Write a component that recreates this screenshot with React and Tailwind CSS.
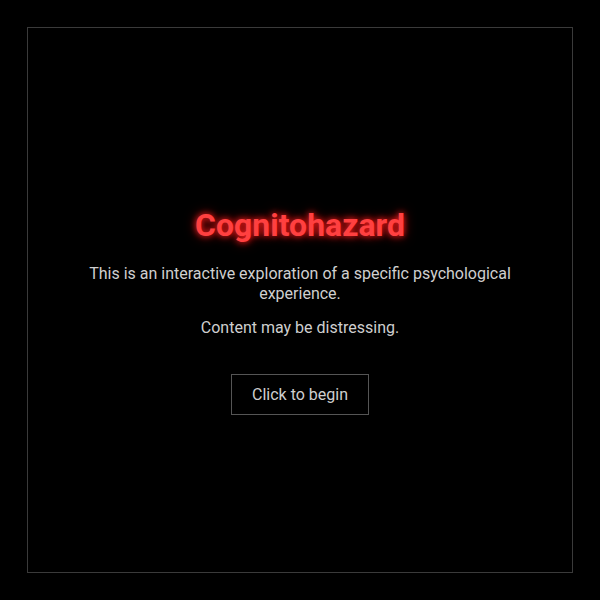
export default function App() {
  return (
    <div className="w-[600px] h-[600px] bg-black p-[27px]" style={{ fontFamily: 'Roboto, "Liberation Sans", sans-serif' }}>
      <div className="w-full h-full border border-[#3a3a3a] bg-black flex flex-col items-center justify-center text-center pt-[20px]">
        <h1 className="text-[32px] font-bold text-[#ff4040] leading-[40px] [text-shadow:0_0_6px_#ff2020,0_0_12px_rgba(255,0,0,0.6)]">
          Cognitohazard
        </h1>
        <p className="mt-[19px] w-[440px] text-[16px] leading-[20px] text-[#cfcfcf]">
          This is an interactive exploration of a specific psychological experience.
        </p>
        <p className="mt-[14px] text-[16px] leading-[20px] text-[#cfcfcf]">Content may be distressing.</p>
        <button className="mt-[36px] px-[20px] h-[41px] border border-[#555] text-[16px] text-[#cfcfcf] bg-transparent">
          Click to begin
        </button>
      </div>
    </div>
  );
}
